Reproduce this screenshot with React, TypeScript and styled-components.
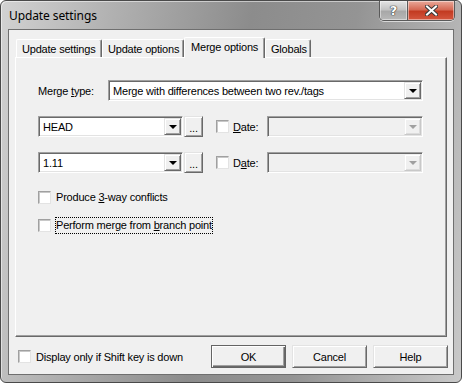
import styled, { createGlobalStyle, css } from 'styled-components';

const GlobalStyle = createGlobalStyle`
  html, body {
    margin: 0;
    padding: 0;
    background: #ffffff;
  }
  body {
    font-family: "Liberation Sans", Arial, sans-serif;
    font-size: 11px;
    letter-spacing: -0.2px;
    color: #000;
  }
`;

const sunken = css`
  border: 1px solid;
  border-color: #a0a0a0 #ffffff #ffffff #a0a0a0;
  box-shadow: inset 1px 1px 0 #696969, inset -1px -1px 0 #e3e3e3;
`;

const raised = css`
  border: 1px solid;
  border-color: #e3e3e3 #696969 #696969 #e3e3e3;
  box-shadow: inset 1px 1px 0 #ffffff, inset -1px -1px 0 #a0a0a0;
`;

const Window = styled.div`
  box-sizing: border-box;
  width: 462px;
  height: 383px;
  border: 1px solid #4a4a4a;
  border-radius: 6px;
  padding: 0 7px 7px 7px;
  display: flex;
  flex-direction: column;
  background: linear-gradient(100deg, #d2d2d2 0%, #b0b0b0 22%, #8c8c8c 48%, #949494 68%, #c9c9c9 100%);
  box-shadow: inset 1px 1px 0 rgba(255, 255, 255, 0.5);
`;

const TitleBar = styled.div`
  height: 28px;
  display: flex;
  justify-content: space-between;
  align-items: flex-start;
`;

const Title = styled.div`
  font-family: "Noto Sans", "Open Sans", sans-serif;
  font-size: 12px;
  letter-spacing: -0.1px;
  line-height: 29px;
  padding-left: 1px;
  color: #000;
`;

const CaptionButtons = styled.div`
  display: flex;
  margin-right: -1px;
  border: 1px solid #5a5a5a;
  border-top: none;
  border-radius: 0 0 5px 5px;
  overflow: hidden;
  box-shadow: 0 1px 0 rgba(255, 255, 255, 0.6);
`;

const CaptionButton = styled.div<{ $close?: boolean }>`
  box-sizing: border-box;
  height: 19px;
  width: ${p => (p.$close ? 47 : 27)}px;
  display: flex;
  align-items: center;
  justify-content: center;
  background: ${p =>
    p.$close
      ? 'linear-gradient(#e9a99a 0%, #d56a55 45%, #c33b22 55%, #d4573f 100%)'
      : 'linear-gradient(#e4e4e4 0%, #c4c4c4 45%, #a8a8a8 55%, #b8b8b8 100%)'};
  border-left: ${p => (p.$close ? '1px solid #5a5a5a' : 'none')};
  box-shadow: inset 0 0 0 1px rgba(255, 255, 255, 0.45);
  font-family: "DejaVu Sans", sans-serif;
  font-weight: bold;
  font-size: 13px;
  letter-spacing: 0;
  color: #fff;
  text-shadow: 0 0 1px #333, 0 0 1px #333, 0 0 1px #333;
`;

const Client = styled.div`
  flex: 1;
  box-sizing: border-box;
  background: #f0f0f0;
  border: 1px solid #6f6f6f;
  padding: 7px 6px 0 6px;
  display: flex;
  flex-direction: column;
`;

const TabStrip = styled.div`
  display: flex;
  align-items: flex-end;
  height: 20px;
  padding-left: 1px;
`;

const Tab = styled.div<{ $active?: boolean; $width: number }>`
  box-sizing: border-box;
  width: ${p => p.$width}px;
  height: ${p => (p.$active ? 21 : 18)}px;
  margin-bottom: ${p => (p.$active ? -1 : 0)}px;
  position: relative;
  z-index: ${p => (p.$active ? 1 : 0)};
  background: #f0f0f0;
  border-top: 1px solid #ffffff;
  border-left: 1px solid #ffffff;
  border-right: 1px solid #696969;
  border-radius: 2px 2px 0 0;
  box-shadow: inset -1px 0 0 #a0a0a0;
  padding: ${p => (p.$active ? '3px 0 0 6px' : '3px 0 0 5px')};
  line-height: 13px;
  white-space: nowrap;
`;

const Panel = styled.div`
  box-sizing: border-box;
  height: 280px;
  border: 1px solid;
  border-color: #ffffff #696969 #696969 #ffffff;
  box-shadow: inset -1px -1px 0 #a0a0a0;
  padding: 22px 0 0 22px;
  display: flex;
  flex-direction: column;
`;

const Row = styled.div`
  display: flex;
  align-items: center;
  height: 21px;
  margin-bottom: 15px;
`;

const FieldLabel = styled.span`
  width: 70px;
  white-space: nowrap;
`;

const Combo = styled.div<{ $width: number; $disabled?: boolean }>`
  box-sizing: border-box;
  width: ${p => p.$width}px;
  height: 21px;
  ${sunken};
  background: ${p => (p.$disabled ? '#f0f0f0' : '#ffffff')};
  padding: 1px;
  display: flex;
  align-items: center;
`;

const ComboText = styled.span`
  flex: 1;
  padding-left: 3px;
  white-space: nowrap;
  overflow: hidden;
`;

const DropButton = styled.div<{ $disabled?: boolean }>`
  box-sizing: border-box;
  width: 17px;
  height: 17px;
  ${raised};
  ${p =>
    p.$disabled &&
    css`
      border-color: #f0f0f0 #c8c8c8 #c8c8c8 #f0f0f0;
      box-shadow: inset 1px 1px 0 #ffffff, inset -1px -1px 0 #dcdcdc;
    `}
  background: #f0f0f0;
  display: flex;
  align-items: center;
  justify-content: center;
  &::after {
    content: '';
    border-left: 4px solid transparent;
    border-right: 4px solid transparent;
    border-top: 4px solid ${p => (p.$disabled ? '#a0a0a0' : '#000000')};
    margin-top: 1px;
  }
`;

const DotsButton = styled.div`
  box-sizing: border-box;
  width: 19px;
  height: 21px;
  margin-left: 1px;
  ${raised};
  background: #f0f0f0;
  display: flex;
  justify-content: center;
  line-height: 21px;
  padding-top: 1px;
`;

const Checkbox = styled.span<{ $gap?: number }>`
  box-sizing: border-box;
  display: inline-block;
  flex: none;
  width: 13px;
  height: 13px;
  margin-left: ${p => p.$gap ?? 0}px;
  background: #ffffff;
  border: 1px solid;
  border-color: #a0a0a0 #e3e3e3 #e3e3e3 #a0a0a0;
  box-shadow: inset 1px 1px 0 #c8c8c8;
`;

const DateLabel = styled.span`
  width: 34px;
  margin-left: 4px;
`;

const CheckRow = styled.div<{ $top: number }>`
  display: flex;
  align-items: center;
  height: 13px;
  margin-top: ${p => p.$top}px;
`;

const CheckLabel = styled.span<{ $focus?: boolean }>`
  margin-left: 4px;
  border: 1px dotted ${p => (p.$focus ? '#000000' : 'transparent')};
  padding: 1px 0;
  line-height: 13px;
  white-space: nowrap;
`;

const Footer = styled.div`
  display: flex;
  align-items: center;
  height: 23px;
  margin-top: 8px;
  padding-left: 3px;
`;

const FooterLabel = styled.span`
  margin-left: 5px;
`;

const ButtonGroup = styled.div`
  display: flex;
  gap: 6px;
  margin-left: auto;
  margin-right: -1px;
`;

const PushButton = styled.div<{ $default?: boolean }>`
  box-sizing: border-box;
  width: 75px;
  height: 23px;
  display: flex;
  align-items: center;
  justify-content: center;
  background: #f0f0f0;
  border: 1px solid;
  border-color: ${p => (p.$default ? '#646464' : '#e3e3e3 #696969 #696969 #e3e3e3')};
  box-shadow: ${p =>
    p.$default
      ? 'inset 1px 1px 0 #ffffff, inset -1px -1px 0 #696969, inset -2px -2px 0 #a0a0a0'
      : 'inset 1px 1px 0 #ffffff, inset -1px -1px 0 #a0a0a0'};
`;

const CloseIcon = () => (
  <svg width="13" height="11" viewBox="0 0 13 11">
    <path d="M2 1.5 L11 9.5 M11 1.5 L2 9.5" stroke="#3a3a3a" strokeWidth="4" strokeLinecap="square" />
    <path d="M2 1.5 L11 9.5 M11 1.5 L2 9.5" stroke="#ffffff" strokeWidth="2" strokeLinecap="square" />
  </svg>
);

export default function App() {
  return (
    <>
      <GlobalStyle />
      <Window>
        <TitleBar>
          <Title>Update settings</Title>
          <CaptionButtons>
            <CaptionButton>?</CaptionButton>
            <CaptionButton $close>
              <CloseIcon />
            </CaptionButton>
          </CaptionButtons>
        </TitleBar>
        <Client>
          <TabStrip>
            <Tab $width={86}>Update settings</Tab>
            <Tab $width={82}>Update options</Tab>
            <Tab $width={81} $active>
              Merge options
            </Tab>
            <Tab $width={46}>Globals</Tab>
          </TabStrip>
          <Panel>
            <Row>
              <FieldLabel>
                Merge <u>t</u>ype:
              </FieldLabel>
              <Combo $width={315}>
                <ComboText>Merge with differences between two rev./tags</ComboText>
                <DropButton />
              </Combo>
            </Row>
            <Row>
              <Combo $width={145}>
                <ComboText>HEAD</ComboText>
                <DropButton />
              </Combo>
              <DotsButton>...</DotsButton>
              <Checkbox $gap={13} />
              <DateLabel>
                <u>D</u>ate:
              </DateLabel>
              <Combo $width={156} $disabled>
                <ComboText />
                <DropButton $disabled />
              </Combo>
            </Row>
            <Row>
              <Combo $width={145}>
                <ComboText>1.11</ComboText>
                <DropButton />
              </Combo>
              <DotsButton>...</DotsButton>
              <Checkbox $gap={13} />
              <DateLabel>
                D<u>a</u>te:
              </DateLabel>
              <Combo $width={156} $disabled>
                <ComboText />
                <DropButton $disabled />
              </Combo>
            </Row>
            <CheckRow $top={3}>
              <Checkbox />
              <CheckLabel>
                Produce <u>3</u>-way conflicts
              </CheckLabel>
            </CheckRow>
            <CheckRow $top={15}>
              <Checkbox />
              <CheckLabel $focus>
                Perform merge from <u>b</u>ranch point
              </CheckLabel>
            </CheckRow>
          </Panel>
          <Footer>
            <Checkbox />
            <FooterLabel>Display only if Shift key is down</FooterLabel>
            <ButtonGroup>
              <PushButton $default>OK</PushButton>
              <PushButton>Cancel</PushButton>
              <PushButton>Help</PushButton>
            </ButtonGroup>
          </Footer>
        </Client>
      </Window>
    </>
  );
}
